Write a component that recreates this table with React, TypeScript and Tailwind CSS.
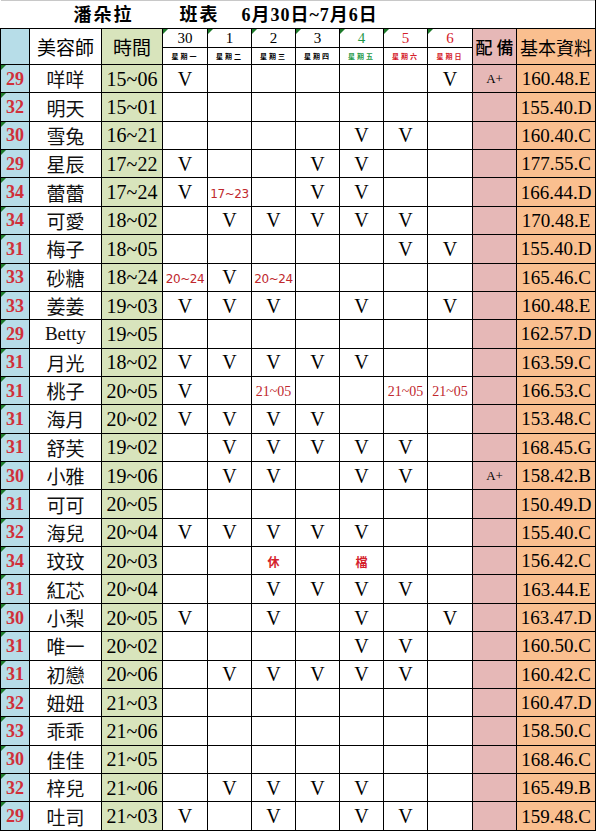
const serif = "font-['Liberation_Serif','Noto_Sans_CJK_TC',serif]";
const cjk = "font-['Noto_Sans_CJK_TC','Liberation_Serif',sans-serif]";

type Cell = string;

interface Row {
  age: number;
  name: string;
  time: string;
  days: Cell[];
  extra?: string;
  info: string;
}

const V = 'V';

const rows: Row[] = [
  { age: 29, name: '咩咩', time: '15~06', days: [V, '', '', '', '', '', V], extra: 'A+', info: '160.48.E' },
  { age: 32, name: '明天', time: '15~01', days: ['', '', '', '', '', '', ''], info: '155.40.D' },
  { age: 30, name: '雪兔', time: '16~21', days: ['', '', '', '', V, V, ''], info: '160.40.C' },
  { age: 29, name: '星辰', time: '17~22', days: [V, '', '', V, V, '', ''], info: '177.55.C' },
  { age: 34, name: '蕾蕾', time: '17~24', days: [V, '17~23', '', V, V, '', ''], info: '166.44.D' },
  { age: 34, name: '可愛', time: '18~02', days: ['', V, V, V, V, V, ''], info: '170.48.E' },
  { age: 31, name: '梅子', time: '18~05', days: ['', '', '', '', '', V, V], info: '155.40.D' },
  { age: 33, name: '砂糖', time: '18~24', days: ['20~24', V, '20~24', '', '', '', ''], info: '165.46.C' },
  { age: 33, name: '姜姜', time: '19~03', days: [V, V, V, '', V, '', V], info: '160.48.E' },
  { age: 29, name: 'Betty', time: '19~05', days: ['', '', '', '', '', '', ''], info: '162.57.D' },
  { age: 31, name: '月光', time: '18~02', days: [V, V, V, V, V, '', ''], info: '163.59.C' },
  { age: 31, name: '桃子', time: '20~05', days: [V, '', '21~05', '', '', '21~05', '21~05'], info: '166.53.C' },
  { age: 31, name: '海月', time: '20~02', days: [V, V, V, V, '', '', ''], info: '153.48.C' },
  { age: 31, name: '舒芙', time: '19~02', days: ['', V, V, V, V, V, ''], info: '168.45.G' },
  { age: 30, name: '小雅', time: '19~06', days: ['', V, V, '', V, V, ''], extra: 'A+', info: '158.42.B' },
  { age: 31, name: '可可', time: '20~05', days: ['', '', '', '', '', '', ''], info: '150.49.D' },
  { age: 32, name: '海兒', time: '20~04', days: [V, V, V, V, V, '', ''], info: '155.40.C' },
  { age: 34, name: '玟玟', time: '20~03', days: ['', '', '休', '', '檔', '', ''], info: '156.42.C' },
  { age: 31, name: '紅芯', time: '20~04', days: ['', '', V, V, V, V, ''], info: '163.44.E' },
  { age: 30, name: '小梨', time: '20~05', days: [V, '', V, '', V, '', V], info: '163.47.D' },
  { age: 31, name: '唯一', time: '20~02', days: ['', '', '', '', V, V, ''], info: '160.50.C' },
  { age: 31, name: '初戀', time: '20~06', days: ['', V, V, V, V, V, ''], info: '160.42.C' },
  { age: 32, name: '妞妞', time: '21~03', days: ['', '', '', '', '', '', ''], info: '160.47.D' },
  { age: 33, name: '乖乖', time: '21~06', days: ['', '', '', '', '', '', ''], info: '158.50.C' },
  { age: 30, name: '佳佳', time: '21~05', days: ['', '', '', '', '', '', ''], info: '168.46.C' },
  { age: 32, name: '梓兒', time: '21~06', days: ['', V, V, V, V, '', ''], info: '165.49.B' },
  { age: 29, name: '吐司', time: '21~03', days: [V, '', V, '', V, V, ''], info: '159.48.C' },
];

const days = [
  { num: '30', week: '星期一', color: 'text-black' },
  { num: '1', week: '星期二', color: 'text-black' },
  { num: '2', week: '星期三', color: 'text-black' },
  { num: '3', week: '星期四', color: 'text-black' },
  { num: '4', week: '星期五', color: 'text-[#1f9a4a]' },
  { num: '5', week: '星期六', color: 'text-[#d4202a]' },
  { num: '6', week: '星期日', color: 'text-[#d4202a]' },
];

// little green "number as text" marker Excel puts in the corner
function Flag() {
  return (
    <span className="absolute left-0 top-0 h-0 w-0 border-t-[5px] border-r-[5px] border-t-[#1d7a2a] border-r-transparent" />
  );
}

function DayCell({ value }: { value: Cell }) {
  if (value === V) {
    return <span className={`${serif} text-[20px] leading-none`}>V</span>;
  }
  if (value === '休' || value === '檔') {
    return <span className={`${cjk} text-[12px] font-bold text-[#d4202a]`}>{value}</span>;
  }
  if (value === '21~05') {
    return <span className={`${serif} text-[14px] text-[#c0282d]`}>{value}</span>;
  }
  if (value) {
    return (
      <span className={`font-['DejaVu_Sans',sans-serif] text-[12px] tracking-[-0.4px] text-[#c0282d]`}>
        {value}
      </span>
    );
  }
  return null;
}

export default function App() {
  return (
    <div className="w-[600px] h-[831px] bg-white overflow-hidden">
      <table className="w-[595px] table-fixed border-collapse border-t border-t-[#c8c8c8] border-r border-r-black">
        <colgroup>
          <col className="w-[29px]" />
          <col className="w-[72px]" />
          <col className="w-[61px]" />
          <col className="w-[45px]" />
          <col className="w-[44px]" />
          <col className="w-[44px]" />
          <col className="w-[44px]" />
          <col className="w-[44px]" />
          <col className="w-[44px]" />
          <col className="w-[45px]" />
          <col className="w-[44px]" />
          <col className="w-[79px]" />
        </colgroup>
        <tbody>
          <tr className="h-[28px]">
            <td colSpan={12} className="p-0">
              <div className={`${serif} flex items-center pl-[73px] text-[18px] font-bold leading-none text-black`}>
                <span className="tracking-[2px]">潘朵拉</span>
                <span className="ml-[46px] tracking-[2px]">班表</span>
                <span className="ml-[22px] tracking-[1px]">6月30日~7月6日</span>
              </div>
            </td>
          </tr>
          <tr className="h-[19px]">
            <td rowSpan={2} className="border border-black bg-[#b7dde8] p-0" />
            <td rowSpan={2} className={`${cjk} border border-black p-0 text-center text-[19px] leading-none`}>
              美容師
            </td>
            <td rowSpan={2} className={`${cjk} border border-black bg-[#d8e4bc] p-0 text-center text-[19px] leading-none`}>
              時間
            </td>
            {days.map((d) => (
              <td
                key={d.num}
                className={`${serif} relative border border-black p-0 text-center text-[15px] leading-none ${d.color}`}
              >
                <Flag />
                {d.num}
              </td>
            ))}
            <td rowSpan={2} className={`${cjk} border border-black bg-[#e6b8b7] p-0 text-center text-[17px] font-medium leading-none`}>
              配 備
            </td>
            <td rowSpan={2} className={`${cjk} border border-black bg-[#fabf8f] p-0 text-center text-[18px] leading-none`}>
              基本資料
            </td>
          </tr>
          <tr className="h-[17px]">
            {days.map((d) => (
              <td
                key={d.week}
                className={`${cjk} border border-black p-0 text-center text-[7px] font-bold leading-none tracking-[2px] ${d.color}`}
              >
                {d.week}
              </td>
            ))}
          </tr>
          {rows.map((r) => (
            <tr key={r.name} className="h-[28.37px]">
              <td className={`${serif} relative border border-black bg-[#b7dde8] p-0 text-center text-[18px] font-bold leading-none text-[#d0303a]`}>
                <Flag />
                {r.age}
              </td>
              <td
                className={`${r.name === 'Betty' ? serif : cjk} border border-black p-0 text-center text-[19px] leading-none text-[#111]`}
              >
                {r.name}
              </td>
              <td className={`${serif} border border-black bg-[#d8e4bc] p-0 text-center text-[20px] leading-none`}>
                {r.time}
              </td>
              {r.days.map((v, i) => (
                <td key={i} className="border border-black p-0 text-center leading-none">
                  <DayCell value={v} />
                </td>
              ))}
              <td className={`${serif} border border-black bg-[#e6b8b7] p-0 text-center text-[13px] leading-none`}>
                {r.extra}
              </td>
              <td className={`${serif} border border-black bg-[#fabf8f] p-0 text-center text-[19px] leading-none`}>
                {r.info}
              </td>
            </tr>
          ))}
        </tbody>
      </table>
    </div>
  );
}
